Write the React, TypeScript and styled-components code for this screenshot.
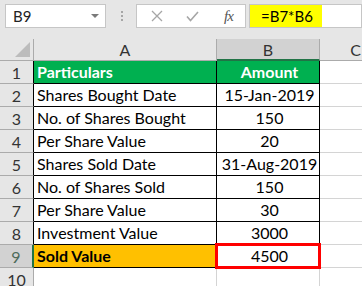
import { Fragment } from "react";
import styled, { createGlobalStyle } from "styled-components";

const GlobalStyle = createGlobalStyle`
  html, body {
    margin: 0;
    padding: 0;
    background: #ffffff;
    overflow: hidden;
  }
  body {
    font-family: Lato, "Open Sans", sans-serif;
  }
`;

const rows = [
  { label: "Shares Bought Date", value: "15-Jan-2019" },
  { label: "No. of Shares Bought", value: "150" },
  { label: "Per Share Value", value: "20" },
  { label: "Shares Sold Date", value: "31-Aug-2019" },
  { label: "No. of Shares Sold", value: "150" },
  { label: "Per Share Value", value: "30" },
  { label: "Investment Value", value: "3000" },
];

const Page = styled.div`
  width: 362px;
  height: 286px;
  overflow: hidden;
  background: #fff;
`;

const Toolbar = styled.div`
  display: flex;
  align-items: flex-start;
  height: 39px;
  background: #e6e6e6;
  box-sizing: border-box;
  padding-top: 4px;
`;

const NameBox = styled.div`
  display: flex;
  align-items: center;
  justify-content: space-between;
  box-sizing: border-box;
  width: 101px;
  height: 24px;
  margin-left: 5px;
  padding: 0 6px 0 7px;
  background: #fff;
  border: 1px solid #c6c6c6;
  font-size: 15px;
  color: #222;
`;

const Caret = styled.span`
  width: 0;
  height: 0;
  border-left: 4px solid transparent;
  border-right: 4px solid transparent;
  border-top: 4px solid #7a7a7a;
`;

const Dots = styled.div`
  display: flex;
  flex-direction: column;
  gap: 2px;
  margin: 7px 13px 0 15px;
  span {
    width: 2px;
    height: 2px;
    background: #a6a6a6;
  }
`;

const ButtonBox = styled.div`
  display: flex;
  align-items: center;
  box-sizing: border-box;
  width: 110px;
  height: 24px;
  background: #fff;
  border: 1px solid #c6c6c6;
  padding-left: 13px;
`;

const IconSlot = styled.span<{ $w: number }>`
  display: flex;
  align-items: center;
  justify-content: center;
  width: ${(p) => p.$w}px;
`;

const Fx = styled.span`
  margin-left: 2px;
  font-family: "Liberation Serif", serif;
  font-style: italic;
  font-size: 15px;
  color: #555;
  letter-spacing: -1px;
`;

const FormulaBox = styled.div`
  flex: 1;
  display: flex;
  box-sizing: border-box;
  height: 24px;
  margin-left: 3px;
  background: #fff;
  border: 1px solid #c6c6c6;
`;

const Highlight = styled.div`
  display: flex;
  align-items: center;
  background: #ffff00;
  padding: 0 9px 0 11px;
  font-size: 15px;
  color: #000;
`;

const Grid = styled.div`
  display: grid;
  grid-template-columns: 34px 183px 103px 72px;
  grid-template-rows: 22px repeat(10, 23px);
  width: 392px;
`;

const Corner = styled.div`
  position: relative;
  background: #e6e6e6;
  border-right: 1px solid #ababab;
  border-bottom: 1px solid #ababab;
  box-sizing: border-box;
  &::after {
    content: "";
    position: absolute;
    right: 3px;
    bottom: 3px;
    width: 0;
    height: 0;
    border-left: 15px solid transparent;
    border-bottom: 15px solid #bcbcbc;
  }
`;

const ColHead = styled.div<{ $selected?: boolean }>`
  display: flex;
  align-items: center;
  justify-content: center;
  box-sizing: border-box;
  background: ${(p) => (p.$selected ? "#d2d2d2" : "#e6e6e6")};
  border-right: 1px solid #ababab;
  border-bottom: ${(p) => (p.$selected ? "2px solid #217346" : "1px solid #ababab")};
  font-size: 16px;
  color: #333;
`;

const RowHead = styled.div<{ $selected?: boolean; $edge?: boolean }>`
  display: flex;
  align-items: center;
  justify-content: center;
  box-sizing: border-box;
  background: ${(p) => (p.$selected ? "#d2d2d2" : "#e6e6e6")};
  border-right: ${(p) =>
    p.$selected ? "2px solid #217346" : p.$edge ? "1px solid #000" : "1px solid #ababab"};
  border-bottom: 1px solid #ababab;
  font-size: 16px;
  color: ${(p) => (p.$selected ? "#4d6b5a" : "#333")};
`;

const Cell = styled.div<{ $bg?: string; $center?: boolean; $bold?: boolean; $color?: string }>`
  display: flex;
  align-items: flex-end;
  justify-content: ${(p) => (p.$center ? "center" : "flex-start")};
  box-sizing: border-box;
  padding: 0 0 2px 3px;
  background: ${(p) => p.$bg || "#fff"};
  border-right: 1px solid #000;
  border-bottom: 1px solid #000;
  font-size: 16px;
  font-weight: ${(p) => (p.$bold ? 700 : 400)};
  color: ${(p) => p.$color || "#000"};
  white-space: nowrap;
  overflow: hidden;
`;

const Active = styled(Cell)`
  position: relative;
  overflow: visible;
  &::after {
    content: "";
    position: absolute;
    left: -2px;
    top: -2px;
    right: -2px;
    bottom: -2px;
    border: 3px solid #ff0000;
  }
`;

const Blank = styled.div`
  box-sizing: border-box;
  border-right: 1px solid #d4d4d4;
  border-bottom: 1px solid #d4d4d4;
  background: #fff;
`;

export default function App() {
  return (
    <Page>
      <GlobalStyle />
      <Toolbar>
        <NameBox>
          B9
          <Caret />
        </NameBox>
        <Dots>
          <span />
          <span />
          <span />
        </Dots>
        <ButtonBox>
          <IconSlot $w={14}>
            <svg width="12" height="12" viewBox="0 0 12 12">
              <path d="M1 1 L11 11 M11 1 L1 11" stroke="#a6a6a6" strokeWidth="1.3" fill="none" />
            </svg>
          </IconSlot>
          <IconSlot $w={22} />
          <IconSlot $w={13}>
            <svg width="13" height="11" viewBox="0 0 13 11">
              <path d="M1 5.5 L4.5 9.5 L12 1" stroke="#a6a6a6" strokeWidth="1.6" fill="none" />
            </svg>
          </IconSlot>
          <IconSlot $w={23} />
          <Fx>fx</Fx>
        </ButtonBox>
        <FormulaBox>
          <Highlight>=B7*B6</Highlight>
        </FormulaBox>
      </Toolbar>
      <Grid>
        <Corner />
        <ColHead>A</ColHead>
        <ColHead $selected>B</ColHead>
        <ColHead>C</ColHead>

        <RowHead $edge>1</RowHead>
        <Cell $bg="#00b050" $bold $color="#fff">Particulars</Cell>
        <Cell $bg="#00b050" $bold $color="#fff" $center>Amount</Cell>
        <Blank />

        {rows.map((r, i) => (
          <Fragment key={i}>
            <RowHead $edge>{i + 2}</RowHead>
            <Cell>{r.label}</Cell>
            <Cell $center>{r.value}</Cell>
            <Blank />
          </Fragment>
        ))}

        <RowHead $selected>9</RowHead>
        <Cell $bg="#ffc000" $bold>Sold Value</Cell>
        <Active $center>4500</Active>
        <Blank />

        <RowHead>10</RowHead>
        <Blank />
        <Blank />
        <Blank />
      </Grid>
    </Page>
  );
}
